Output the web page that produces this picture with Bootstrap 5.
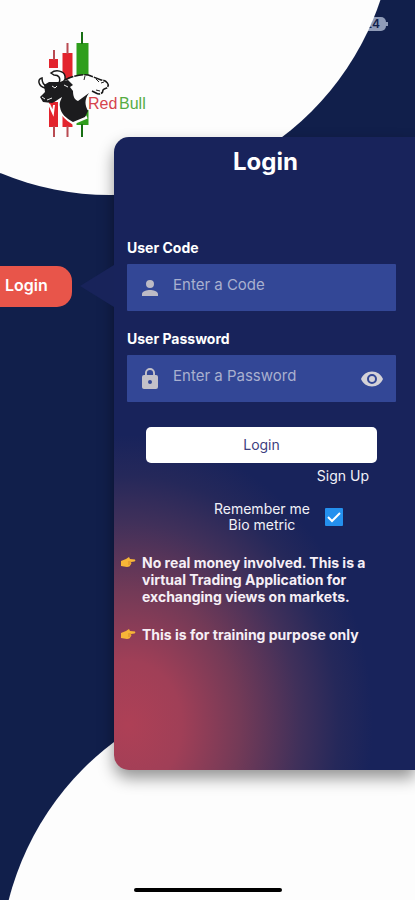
<!DOCTYPE html>
<html lang="en">
<head>
<meta charset="utf-8">
<meta name="viewport" content="width=device-width, initial-scale=1">
<title>RedBull Login</title>
<link href="https://cdn.jsdelivr.net/npm/bootstrap@5.3.0/dist/css/bootstrap.min.css" rel="stylesheet">
<style>
body{background:#111f4b;color:#fff;font-family:Inter,"Open Sans",sans-serif;font-size:14px}
.screen{isolation:isolate}
.disc{position:absolute;width:570px;height:570px;border-radius:50%;background:#fdfdfd;z-index:-1}
.disc-top{left:-175px;top:-375px}
.disc-bottom{left:0;bottom:-355px}
.battery{position:absolute;top:17px;right:29px;width:28px;height:14px;border-radius:5px;background:#8f9bb8;color:#111f4b;font-size:12px;line-height:14px;font-weight:600;z-index:-2;text-align:right;padding-right:6px}
.battery::after{content:"";position:absolute;right:-2px;top:5px;width:2px;height:4px;background:#8f9bb8}
.brand-bar{height:137px;padding:30px 0 0 36px}
.side{width:114px;flex:none;padding-top:128px}
.side-tab{width:72px;height:41px;border-radius:0 15px 15px 0;background:#e8554a;color:#fff;font-size:16px;font-weight:600;padding:0 0 2px 5px;text-align:left}
.side-tab:hover{background:#e8554a;color:#fff}
.notch{width:34px;height:42px;background:#18235a;clip-path:polygon(0 50%,100% 0,100% 100%)}
.panel{border-radius:15px 0 0 15px;min-height:633px;padding:10px 19px 40px 13px;background:radial-gradient(ellipse 245px 290px at 14px 588px,#ae4056 0,#a03f57 22%,#733a57 46%,#40305a 70%,#25285a 86%,#18235b 100%) #18235b;box-shadow:0 8px 16px rgba(0,0,0,.42)}
.heading{font-size:24px;line-height:30px;font-weight:700;padding-left:8px}
.login-form{padding-top:62px}
.field-label{font-size:14px;line-height:18px;font-weight:700;margin-bottom:7px}
.field{height:47px;background:#334796;border-radius:1px;padding:0 12px 0 11px}
.field svg{flex:none}
.field .form-control{background:none;border:0;box-shadow:none;color:#fff;font-size:15px;padding:0 0 4px;margin-left:11px;border-radius:0}
.field .form-control::placeholder{color:#a9b0cf;opacity:1}
.f-code{margin-bottom:19px}
.f-pass{margin-bottom:25px}
.eye{line-height:0}
.submit{height:36px;background:#fff;color:#3d4080;border-radius:5px;font-size:14px;padding:0 0 2px;margin:0 19px;flex:1}
.submit:hover{background:#fff;color:#3d4080}
.signup{color:#f1f1f8;font-size:14px;line-height:18px;padding:4px 27px 0 0}
.remember{padding:16px 53px 0 0;gap:15px;line-height:16px;color:#f1f1f8}
.remember .form-check-input{width:18px;height:18px;margin:0;border-radius:1px;border:0;box-shadow:none}
.remember .form-check-input:checked{background-color:#2490ee;background-image:url("data:image/svg+xml,%3Csvg xmlns='http://www.w3.org/2000/svg' viewBox='0 0 18 18'%3E%3Cpath d='M3 9l4 4 8-8' fill='none' stroke='white' stroke-width='2'/%3E%3C/svg%3E")}
.notes{padding-top:21px;margin-left:-6px;font-weight:700;line-height:17px;color:#f6eff6}
.notes li{display:flex;gap:6px;margin-bottom:21px}
.notes svg{flex:none;margin-top:3px}
.notes span{max-width:228px}
.home-bar{width:148px;height:4px;border-radius:2px;background:#000}
</style>
<script src="https://cdn.jsdelivr.net/npm/bootstrap@5.3.0/dist/js/bootstrap.bundle.min.js"></script>
</head>
<body>
<div class="screen position-relative overflow-hidden min-vh-100 d-flex flex-column">
  <div class="battery">24</div>
  <div class="disc disc-top"></div>
  <div class="disc disc-bottom"></div>

  <header class="brand-bar">
    <svg width="114" height="108" viewBox="36 30 114 108" role="img" aria-label="RedBull">
      <g fill="#e3242d">
        <path d="M49 59h9v9h-9zM49 102h9v25h-9zM62.500 53h10v27h-10zM62.500 116h10v11h-10z"/>
        <path d="M53 50h2v10h-2zM53 126h2v11h-2zM66.500 43h2v11h-2zM66.500 126h2v11h-2z" fill="#b94b52"/>
      </g>
      <path d="M76.500 43h12v36h-12zM76.500 110h12v15h-12z" fill="#2f9e1c"/>
      <path d="M81 32h2v12h-2zM81 124h2v13h-2z" fill="#186f14"/>
      <path d="M65 82C70 76 84 73 91 76L101 79C105 80 109 84 108 88C105 93 102 94 99 92L96 90L87 94C81 99 83 102 79 100L70 92Z" fill="#fdfdfd"/>
      <path d="M65 80C72 76 85 73 91 76L101 80C106 80 109 84 108 86C107 89 105 88 103 90C103 94 99 95 96 93L92 91" fill="none" stroke="#181818" stroke-width="1.600" stroke-dasharray="9 1"/>
      <path d="M85 76l-1 4M96 79l3 3M104 82l-3 1M96 90l4 1" stroke="#222" fill="none"/>
      <path d="M51 73C56 69 64 71 65 76C66 80 63 83 59 83C61 78 59 75 54 75Z" fill="#fdfdfd" stroke="#181818" stroke-width="1.500"/>
      <path d="M42 78C37 79 38 86 45 88L47 86C43 85 42 81 42 78Z" fill="#fdfdfd" stroke="#181818" stroke-width="1.500"/>
      <path d="M62 99C58 106 60 115 73 123L87 117" fill="none" stroke="#fdfdfd" stroke-width="3"/>
      <path d="M44 85L49 82L60 82L68 80L73 85L70 87L73 91C73 97 75 100 78 101L89 93C84 100 85 105 88 111L85 117L73 122C66 118 61 114 60 107C59 102 61 100 62 97C58 99 55 102 52 103L43 102L40 97L45 92Z" fill="#1c1c1e"/>
      <path d="M52 86l3 2 2-2M42 97l3 2M47 100l5-2M64 85l4 2" stroke="#eee" fill="none"/>
      <path d="M49 104L53 113L54 105" fill="none" stroke="#fdfdfd" stroke-width="2"/>
      <g font-family="Liberation Sans,Arial,sans-serif" font-size="16"><text x="88" y="109" fill="#d6434c">Red</text><text x="119" y="109" fill="#55ac43">Bull</text></g>
    </svg>
  </header>

  <main class="d-flex">
    <div class="side">
      <div class="d-flex align-items-center justify-content-between">
        <button type="button" class="btn border-0 side-tab">Login</button>
        <div class="notch"></div>
      </div>
    </div>
    <section class="panel flex-grow-1">
      <h1 class="heading text-center mb-0">Login</h1>
      <form class="login-form d-flex flex-column" onsubmit="return false">
        <label class="field-label" for="code">User Code</label>
        <div class="field f-code d-flex align-items-center">
          <svg width="24" height="24" viewBox="0 0 24 24" fill="#bdbbc5" aria-hidden="true"><path d="M12 12a4 4 0 1 0 0-8 4 4 0 0 0 0 8Zm0 2c-3 0-8 1.300-8 4v2h16v-2c0-2.700-5-4-8-4Z"/></svg>
          <input class="form-control" id="code" type="text" placeholder="Enter a Code">
        </div>
        <label class="field-label" for="pass">User Password</label>
        <div class="field f-pass d-flex align-items-center">
          <svg width="24" height="24" viewBox="0 0 24 24" fill="#c3c1c9" aria-hidden="true"><path fill-rule="evenodd" d="M18 8h-1V6A5 5 0 0 0 7 6v2H6a2 2 0 0 0-2 2v10c0 1.100.9 2 2 2h12a2 2 0 0 0 2-2V10a2 2 0 0 0-2-2Zm-6 9a2 2 0 1 1 0-4 2 2 0 0 1 0 4ZM8.900 8V6a3.100 3.100 0 0 1 6.200 0v2Z"/></svg>
          <input class="form-control" id="pass" type="password" placeholder="Enter a Password">
          <button type="button" class="btn p-0 border-0 eye" aria-label="Show password"><svg width="24" height="24" viewBox="0 0 24 24" fill="#d4d2d8"><path d="M12 4.500C7 4.500 2.700 7.600 1 12c1.700 4.400 6 7.500 11 7.500s9.300-3.100 11-7.500c-1.700-4.400-6-7.500-11-7.500ZM12 17a5 5 0 1 1 0-10 5 5 0 0 1 0 10Zm0-8a3 3 0 1 0 0 6 3 3 0 0 0 0-6Z"/></svg></button>
        </div>
        <div class="d-flex"><button type="submit" class="btn border-0 submit">Login</button></div>
        <a href="#" class="signup align-self-end text-decoration-none">Sign Up</a>
        <div class="remember d-flex align-items-center justify-content-end">
          <label class="text-center" for="remember">Remember me<br>Bio metric</label>
          <input class="form-check-input" type="checkbox" id="remember" checked>
        </div>
      </form>
      <ul class="notes list-unstyled mb-0">
        <li><svg width="15" height="11" viewBox="0 0 15 11" aria-hidden="true"><path d="M0 4L5 2L8 0L9 2L14 2.500Q15 4 13.500 4.500L10 5Q11 7 9.500 8Q9 10 6 10L0 9Z" fill="#f7b637"/><path d="M7 5h3M7 7h2.500" stroke="#c87829" stroke-width=".7"/></svg><span>No real money involved. This is a virtual Trading Application for exchanging views on markets.</span></li>
        <li><svg width="15" height="11" viewBox="0 0 15 11" aria-hidden="true"><path d="M0 4L5 2L8 0L9 2L14 2.500Q15 4 13.500 4.500L10 5Q11 7 9.500 8Q9 10 6 10L0 9Z" fill="#f7b637"/><path d="M7 5h3M7 7h2.500" stroke="#c87829" stroke-width=".7"/></svg><span>This is for training purpose only</span></li>
      </ul>
    </section>
  </main>
  <div class="home-bar mt-auto mx-auto mb-2"></div>
</div>
</body>
</html>
